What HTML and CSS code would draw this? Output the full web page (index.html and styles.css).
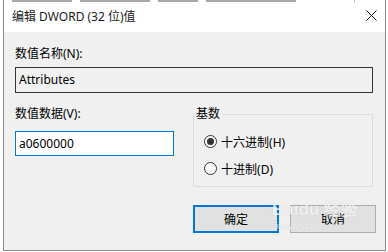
FILE: index.html
```html
<!DOCTYPE html>
<html>
  <head>
    <meta name="viewport" content="width=device-width, initial-scale=1.0">
    <title>编辑 DWORD (32 位)值</title>
    <link rel="stylesheet" href="styles.css">
  </head>
  <body>
    <div class="behind">
      <span class="frag f1"></span>
      <span class="frag f2"></span>
      <span class="frag f3"></span>
      <span class="frag f4"></span>
      <span class="frag f5"></span>
    </div>
    <div class="dialog">
      <div class="titlebar">
        <span class="title">编辑 DWORD (32 位)值</span>
        <svg class="close" width="11" height="11" viewBox="0 0 11 11">
          <path d="M0.5 0.5 L10.5 10.5 M10.5 0.5 L0.5 10.5" stroke="#1a1a1a" stroke-width="1" fill="none" />
        </svg>
      </div>
      <div class="content">
        <div class="label">数值名称(N):</div>
        <div class="field readonly">Attributes</div>
        <div class="row">
          <div class="col-left">
            <div class="label">数值数据(V):</div>
            <div class="field edit">a0600000</div>
          </div>
          <fieldset class="group">
            <legend>基数</legend>
            <div class="radio-item">
              <span class="radio checked"></span>
              <span>十六进制(H)</span>
            </div>
            <div class="radio-item">
              <span class="radio"></span>
              <span>十进制(D)</span>
            </div>
          </fieldset>
        </div>
        <div class="buttons">
          <button class="btn primary">确定</button>
          <button class="btn">取消</button>
        </div>
      </div>
      <div class="watermark">
        <span class="wm-logo">Bai<b>du</b> 经验</span>
        <span class="wm-url">jingyan.baidu.com</span>
      </div>
    </div>
  </body>
</html>
```

FILE: styles.css
```css
body {
  margin: 0;
  background-color: #ffffff;
  font-family: "Noto Sans", "Noto Sans CJK SC", sans-serif;
  font-size: 12px;
  color: #000000;
}

.behind {
  height: 3px;
  margin-left: 3px;
  width: 383px;
  border-left: 1px solid #8a8a8a;
  border-right: 1px solid #8a8a8a;
  box-sizing: border-box;
  display: flex;
  align-items: flex-start;
}

.frag {
  height: 2px;
  background-color: #a8a8a8;
  margin-right: 8px;
}

.f1 { width: 60px; margin-left: 8px; }
.f2 { width: 70px; }
.f3 { width: 40px; }
.f4 { width: 90px; }
.f5 { width: 1px; height: 3px; margin-left: 50px; background-color: #c8c8c8; }

.dialog {
  position: relative;
  margin-left: 3px;
  width: 383px;
  height: 248px;
  box-sizing: border-box;
  border: 1px solid #8a8a8a;
  border-top: none;
  background-color: #f0f0f0;
}

.titlebar {
  height: 29px;
  background-color: #ffffff;
  display: flex;
  align-items: center;
  padding-left: 8px;
  padding-right: 8px;
}

.title {
  flex-grow: 1;
  font-size: 12px;
  color: #1a1a1a;
  padding-bottom: 4px;
}

.close {
  margin-bottom: 4px;
}

.content {
  padding: 14px 12px 0 11px;
}

.label {
  line-height: 16px;
  height: 16px;
}

.field {
  box-sizing: border-box;
  height: 26px;
  line-height: 24px;
  padding-left: 3px;
  margin-top: 5px;
}

.readonly {
  border: 1px solid #333333;
  background-color: #f0f0f0;
}

.row {
  display: flex;
  margin-top: 13px;
}

.col-left {
  width: 161px;
}

.edit {
  margin-top: 9px;
  height: 25px;
  line-height: 23px;
  border: 1px solid #0078d7;
  background-color: #ffffff;
}

.group {
  margin: 0 0 0 19px;
  padding: 6px 0 0 10px;
  width: 182px;
  height: 81px;
  box-sizing: border-box;
  border: 1px solid #dcdcdc;
}

.group legend {
  padding: 0 2px;
  margin-left: -10px;
  line-height: 16px;
}

.radio-item {
  display: flex;
  align-items: center;
  height: 27px;
  gap: 4px;
}

.radio {
  width: 13px;
  height: 13px;
  box-sizing: border-box;
  border: 1px solid #333333;
  border-radius: 50%;
  background-color: #ffffff;
  display: flex;
  align-items: center;
  justify-content: center;
}

.radio.checked::after {
  content: "";
  width: 7px;
  height: 7px;
  border-radius: 50%;
  background-color: #333333;
}

.buttons {
  display: flex;
  justify-content: flex-end;
  gap: 11px;
  margin-top: 18px;
  margin-right: -3px;
}

.btn {
  width: 86px;
  height: 28px;
  box-sizing: border-box;
  background-color: #e1e1e1;
  border: 1px solid #adadad;
  font-family: "Noto Sans", "Noto Sans CJK SC", sans-serif;
  font-size: 12px;
  color: #000000;
  padding: 0;
}

.btn.primary {
  border: 2px solid #0078d7;
}

.watermark {
  position: absolute;
  left: 268px;
  top: 196px;
  display: flex;
  flex-direction: column;
  align-items: flex-start;
  pointer-events: none;
}

.wm-logo {
  font-family: "Liberation Sans", sans-serif;
  font-size: 17px;
  font-weight: bold;
  color: rgba(255, 255, 255, 0.75);
  text-shadow: 0 0 1px rgba(120, 120, 120, 0.35);
  line-height: 22px;
}

.wm-logo b {
  font-weight: bold;
}

.wm-url {
  font-family: "Liberation Sans", sans-serif;
  font-size: 9px;
  color: rgba(255, 255, 255, 0.8);
  text-shadow: 0 0 1px rgba(120, 120, 120, 0.35);
  margin-left: 2px;
}
```
